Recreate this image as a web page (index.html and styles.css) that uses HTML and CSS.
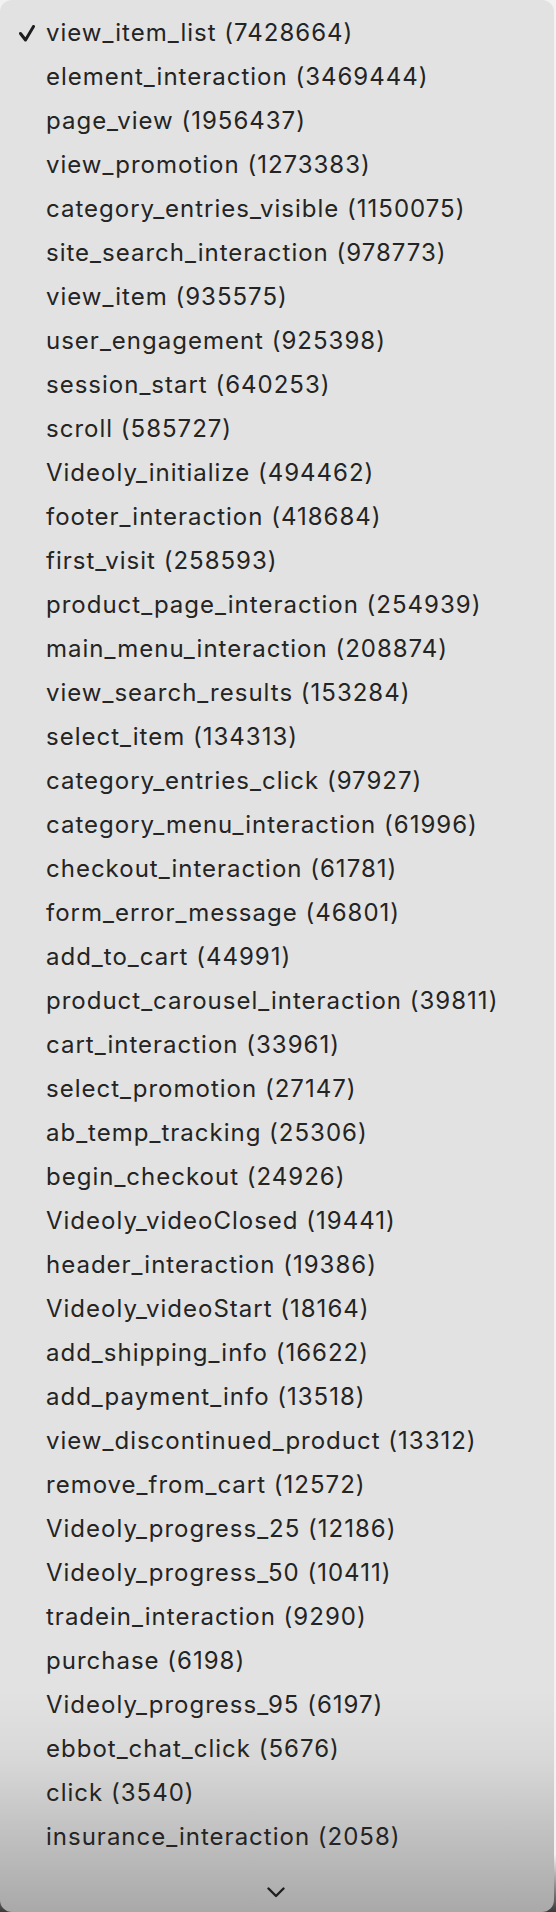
FILE: index.html
```html
<!DOCTYPE html>
<html>
<head>
<meta charset="utf-8">
<link rel="stylesheet" href="styles.css">
</head>
<body>
<div class="menu">
  <ul class="list">
    <li class="item checked"><svg class="check" viewBox="0 0 16 17" width="16" height="17"><path d="M1.5 8.5 L6.5 15 L14.5 1.5" fill="none" stroke="#1e1e1e" stroke-width="3" stroke-linecap="round" stroke-linejoin="round"/></svg>view_item_list (7428664)</li>
    <li class="item">element_interaction (3469444)</li>
    <li class="item">page_view (1956437)</li>
    <li class="item">view_promotion (1273383)</li>
    <li class="item">category_entries_visible (1150075)</li>
    <li class="item">site_search_interaction (978773)</li>
    <li class="item">view_item (935575)</li>
    <li class="item">user_engagement (925398)</li>
    <li class="item">session_start (640253)</li>
    <li class="item">scroll (585727)</li>
    <li class="item">Videoly_initialize (494462)</li>
    <li class="item">footer_interaction (418684)</li>
    <li class="item">first_visit (258593)</li>
    <li class="item">product_page_interaction (254939)</li>
    <li class="item">main_menu_interaction (208874)</li>
    <li class="item">view_search_results (153284)</li>
    <li class="item">select_item (134313)</li>
    <li class="item">category_entries_click (97927)</li>
    <li class="item">category_menu_interaction (61996)</li>
    <li class="item">checkout_interaction (61781)</li>
    <li class="item">form_error_message (46801)</li>
    <li class="item">add_to_cart (44991)</li>
    <li class="item">product_carousel_interaction (39811)</li>
    <li class="item">cart_interaction (33961)</li>
    <li class="item">select_promotion (27147)</li>
    <li class="item">ab_temp_tracking (25306)</li>
    <li class="item">begin_checkout (24926)</li>
    <li class="item">Videoly_videoClosed (19441)</li>
    <li class="item">header_interaction (19386)</li>
    <li class="item">Videoly_videoStart (18164)</li>
    <li class="item">add_shipping_info (16622)</li>
    <li class="item">add_payment_info (13518)</li>
    <li class="item">view_discontinued_product (13312)</li>
    <li class="item">remove_from_cart (12572)</li>
    <li class="item">Videoly_progress_25 (12186)</li>
    <li class="item">Videoly_progress_50 (10411)</li>
    <li class="item">tradein_interaction (9290)</li>
    <li class="item">purchase (6198)</li>
    <li class="item">Videoly_progress_95 (6197)</li>
    <li class="item">ebbot_chat_click (5676)</li>
    <li class="item">click (3540)</li>
    <li class="item">insurance_interaction (2058)</li>
  </ul>
  <div class="more"><svg viewBox="0 0 18 11" width="18" height="11"><path d="M1.5 1.5 L9 9 L16.5 1.5" fill="none" stroke="#1e1e1e" stroke-width="2.4" stroke-linecap="round" stroke-linejoin="round"/></svg></div>
</div>
</body>
</html>
```

FILE: styles.css
```css
html, body {
  margin: 0;
  padding: 0;
}
body {
  width: 556px;
  height: 1912px;
  overflow: hidden;
  background: linear-gradient(to bottom, #f2f2f2 0%, #f2f2f2 97%, #3a3a3a 100%);
  font-family: Inter, "Noto Sans", sans-serif;
}
.menu {
  width: 554px;
  height: 1912px;
  box-sizing: border-box;
  border-radius: 12px;
  background: linear-gradient(to bottom, #e2e2e2 0%, #e2e2e2 88.5%, #d8d8d8 92%, #c0c0c0 96%, #a9a9a9 100%);
  display: flex;
  flex-direction: column;
  padding-top: 11px;
  overflow: hidden;
}
.list {
  list-style: none;
  margin: 0;
  padding: 0;
}
.item {
  position: relative;
  height: 44px;
  line-height: 44px;
  padding-left: 46px;
  font-size: 24px;
  letter-spacing: 1px;
  color: #242424;
  white-space: nowrap;
}
.check {
  position: absolute;
  left: 19px;
  top: 14px;
  display: block;
}
.more {
  flex: 1;
  display: flex;
  align-items: flex-end;
  justify-content: center;
  padding-bottom: 14px;
  padding-right: 2px;
}
.more svg {
  display: block;
}
```
